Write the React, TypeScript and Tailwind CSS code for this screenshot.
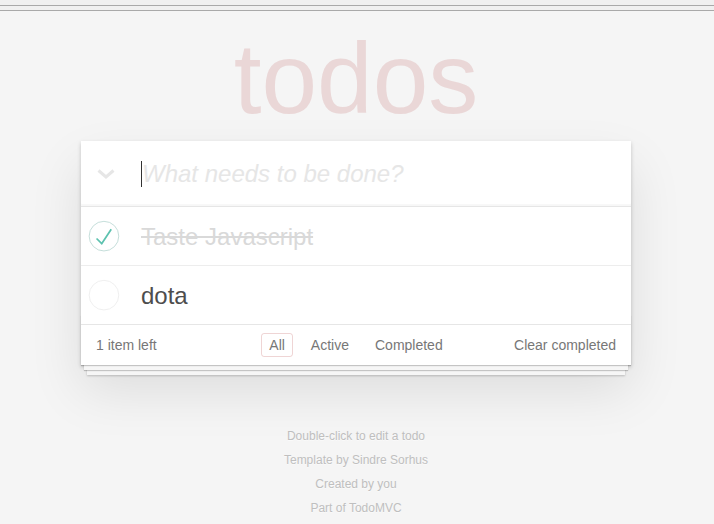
import React from "react";

function Check({ done }: { done: boolean }) {
  return (
    <svg width="40" height="40" viewBox="-10 -18 100 135">
      <circle cx="50" cy="50" r="50" fill="none" stroke={done ? "#bddad5" : "#ededed"} strokeWidth="3" />
      {done && <path fill="#5dc2af" d="M72 25L42 71 27 56l-4 4 20 20 34-52z" />}
    </svg>
  );
}

export default function App() {
  return (
    <div className="min-h-screen bg-[#f5f5f5] font-['Liberation_Sans',Arial,sans-serif] text-[14px] text-[#4d4d4d]">
      <div className="h-[5px] bg-[#f0f0f0]" />
      <div className="h-px bg-[#a9a9a9]" />
      <div className="h-[4px] bg-[#f0f0f0]" />
      <div className="h-px bg-[#a9a9a9]" />
      <div className="pr-[2px]">
        <div className="mx-auto w-[550px]">
          <h1 className="h-[130px] pt-[17px] text-center text-[100px] leading-[100px] font-thin text-[rgba(175,47,47,0.15)]">
            todos
          </h1>
          <section className="relative bg-white shadow-[0_2px_4px_0_rgba(0,0,0,0.2),0_25px_50px_0_rgba(0,0,0,0.1)]">
            <header className="flex h-[65px] items-center shadow-[inset_0_-2px_1px_rgba(0,0,0,0.03)]">
              <div className="flex w-[60px] items-center pl-[16px]">
                <svg width="18" height="10" viewBox="0 0 18 10">
                  <path d="M1.5 1.5 L9 8 L16.5 1.5" fill="none" stroke="#e6e6e6" strokeWidth="3" />
                </svg>
              </div>
              <span className="h-[26px] w-px bg-[#333]" />
              <input
                className="min-w-0 flex-1 bg-transparent pr-[16px] text-[24px] leading-[33px] italic caret-transparent outline-none placeholder:text-[#e6e6e6]"
                placeholder="What needs to be done?"
              />
            </header>
            <ul className="border-t border-[#e6e6e6]">
              <li className="flex h-[59px] items-center border-b border-[#ededed]">
                <span className="flex w-[60px] items-center">
                  <Check done />
                </span>
                <span className="text-[24px] leading-[29px] text-[#d9d9d9] line-through">Taste Javascript</span>
              </li>
              <li className="flex h-[58px] items-center">
                <span className="flex w-[60px] items-center">
                  <Check done={false} />
                </span>
                <span className="text-[24px] leading-[29px] text-[#4d4d4d]">dota</span>
              </li>
            </ul>
            <footer className="relative grid h-[41px] grid-cols-[1fr_auto_1fr] items-center border-t border-[#e6e6e6] px-[15px] text-[#777]">
              <div className="pointer-events-none absolute inset-x-0 bottom-0 h-[50px] shadow-[0_1px_1px_rgba(0,0,0,0.2),0_8px_0_-3px_#f6f6f6,0_9px_1px_-3px_rgba(0,0,0,0.2),0_16px_0_-6px_#f6f6f6,0_17px_2px_-6px_rgba(0,0,0,0.2)]" />
              <span className="relative leading-[20px]">1 item left</span>
              <ul className="relative flex gap-[4px]">
                <li className="mx-[3px] rounded-[3px] border border-[rgba(175,47,47,0.2)] px-[7px] py-[3px] leading-[16px]">All</li>
                <li className="mx-[3px] rounded-[3px] border border-transparent px-[7px] py-[3px] leading-[16px]">Active</li>
                <li className="mx-[3px] rounded-[3px] border border-transparent px-[7px] py-[3px] leading-[16px]">Completed</li>
              </ul>
              <span className="relative text-right leading-[20px]">Clear completed</span>
            </footer>
          </section>
          <footer className="mt-[59px] text-center text-[12px] text-[#bfbfbf] [text-shadow:0_1px_0_rgba(255,255,255,0.5)]">
            <p className="leading-[24px]">Double-click to edit a todo</p>
            <p className="leading-[24px]">Template by Sindre Sorhus</p>
            <p className="leading-[24px]">Created by you</p>
            <p className="leading-[24px]">Part of TodoMVC</p>
          </footer>
        </div>
      </div>
    </div>
  );
}
